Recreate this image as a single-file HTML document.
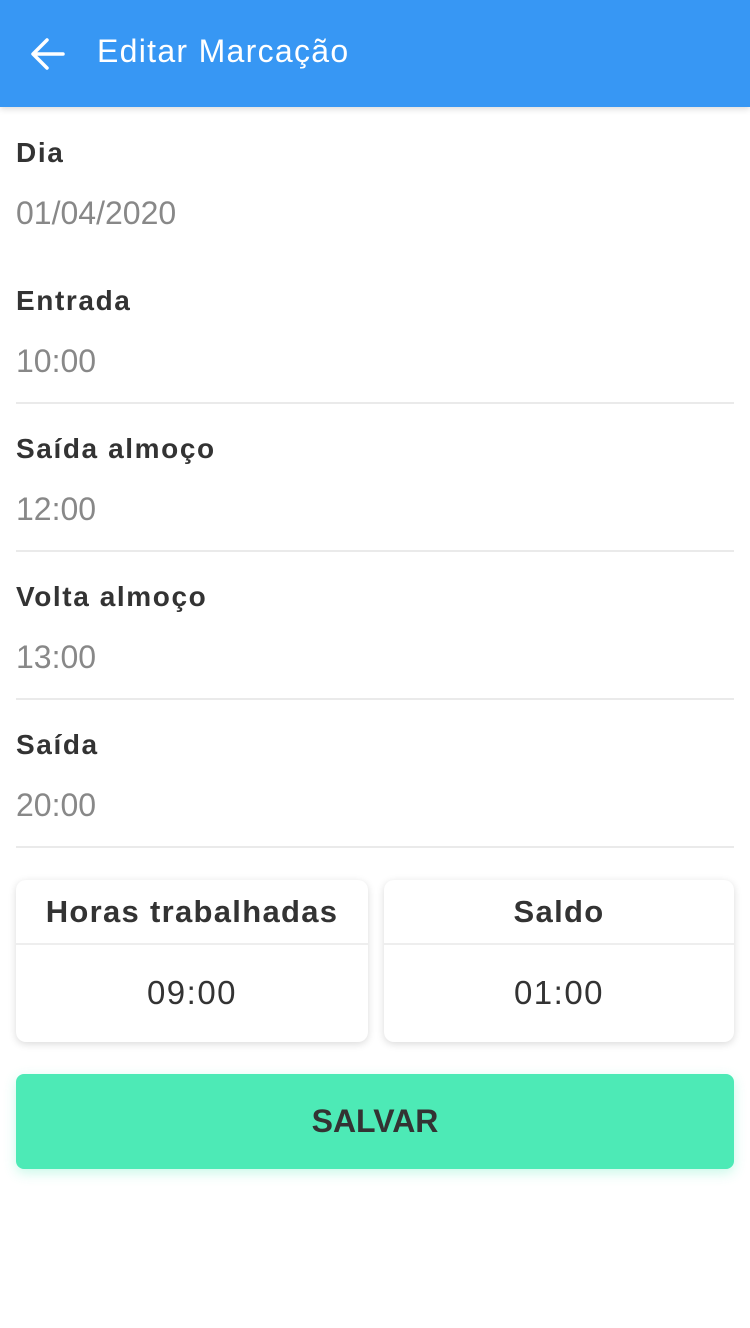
<!DOCTYPE html>
<html><head><meta charset="utf-8"><style>
body{margin:0;width:750px;height:1328px;background:#fff;font-family:"Liberation Sans",sans-serif;position:relative;overflow:hidden}
.hdr{position:absolute;left:0;top:0;width:750px;height:107px;background:#3797f4;box-shadow:0 2px 6px rgba(0,0,0,.15)}
.hdr .t{position:absolute;left:97px;top:33px;font-size:32px;color:#fff;letter-spacing:1.3px}
.lbl{position:absolute;left:16px;font-size:28px;font-weight:bold;color:#333;letter-spacing:1.6px}
.val{position:absolute;left:16px;font-size:32px;color:#888}
.ln{position:absolute;left:16px;width:718px;height:2px;background:#eaeaea}
.card{position:absolute;top:880px;height:162px;background:#fff;border-radius:10px;box-shadow:0 2px 8px rgba(0,0,0,.15)}
.card .h{height:63px;border-bottom:2px solid #eee;text-align:center;font-size:31px;font-weight:bold;color:#333;line-height:63px;letter-spacing:1.3px}
.card .v{text-align:center;font-size:33px;color:#333;line-height:96px;letter-spacing:1.5px}
.btn{position:absolute;left:16px;top:1074px;width:718px;height:95px;background:#4deab6;border-radius:8px;text-align:center;line-height:95px;font-size:32px;font-weight:bold;color:#333;box-shadow:0 4px 12px rgba(77,234,182,.3)}
</style></head><body>
<div class="hdr">
<svg style="position:absolute;left:30px;top:37px" width="36" height="34" viewBox="0 0 36 34"><path d="M33 17H4M17 3L3 17l14 14" fill="none" stroke="#fff" stroke-width="3.5" stroke-linecap="round" stroke-linejoin="round"/></svg>
<div class="t">Editar Marcação</div></div>
<div class="lbl" style="top:137px">Dia</div><div class="val" style="top:195px">01/04/2020</div>
<div class="lbl" style="top:285px">Entrada</div><div class="val" style="top:343px">10:00</div><div class="ln" style="top:402px"></div>
<div class="lbl" style="top:433px">Saída almoço</div><div class="val" style="top:491px">12:00</div><div class="ln" style="top:550px"></div>
<div class="lbl" style="top:581px">Volta almoço</div><div class="val" style="top:639px">13:00</div><div class="ln" style="top:698px"></div>
<div class="lbl" style="top:729px">Saída</div><div class="val" style="top:787px">20:00</div><div class="ln" style="top:846px"></div>
<div class="card" style="left:16px;width:352px"><div class="h">Horas trabalhadas</div><div class="v">09:00</div></div>
<div class="card" style="left:384px;width:350px"><div class="h">Saldo</div><div class="v">01:00</div></div>
<div class="btn">SALVAR</div>
</body></html>
